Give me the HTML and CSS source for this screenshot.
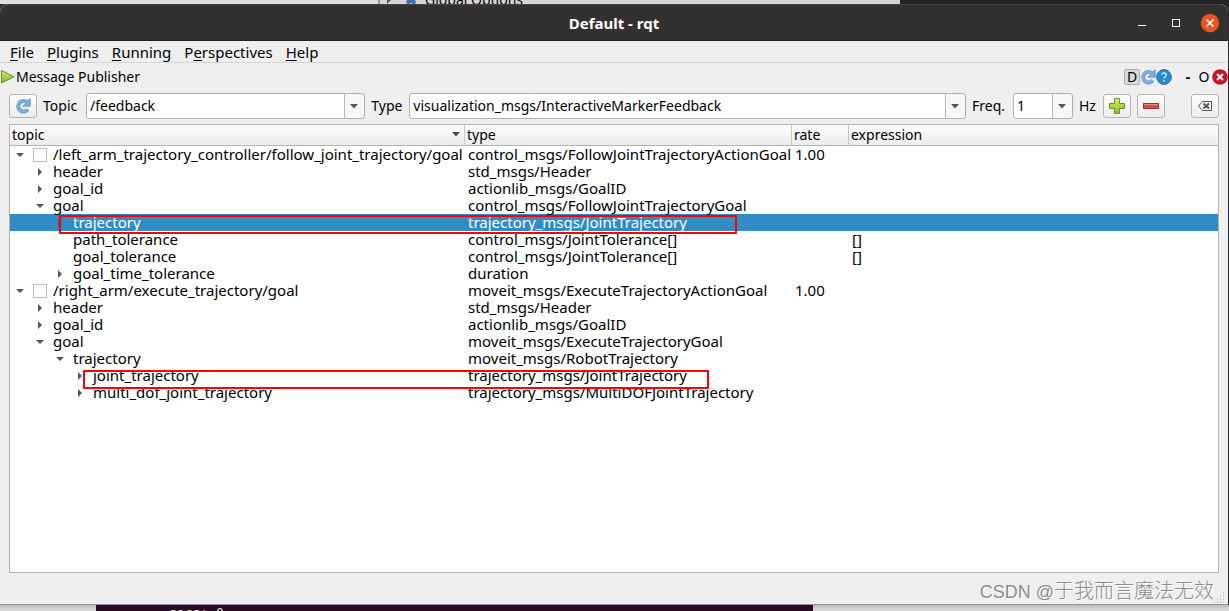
FILE: index.html
```html
<!DOCTYPE html>
<html lang="en">
<head>
<meta charset="utf-8">
<title>Default - rqt</title>
<link rel="stylesheet" href="styles.css">
</head>
<body>
<div class="backdrop-top"><div class="behind-window"><svg class="behind-arrow" width="4" height="4"><path d="M0 0h4L0 4z" fill="#555"/></svg><svg width="12" height="5"><path d="M2 0h8l1 2-1 2H8L6 3 4 4H2L1 2z" fill="#4670b5"/></svg><span>Global Options</span></div></div>
<main class="window">
  <header class="titlebar">
    <h1>Default - rqt</h1>
    <div class="window-buttons">
      <button aria-label="Minimize"><svg width="20" height="20"><path d="M6 12.5h8" stroke="#fff"/></svg></button>
      <button aria-label="Maximize"><svg width="20" height="20"><rect x="6.5" y="6.5" width="7" height="7" fill="none" stroke="#fff"/></svg></button>
      <button aria-label="Close"><svg width="20" height="20"><circle cx="10" cy="10" r="9.2" fill="#e95420"/><path d="M6.5 6.5l7 7m0-7l-7 7" stroke="#fff" stroke-width="1.5"/></svg></button>
    </div>
  </header>
  <nav class="menubar">
    <button><u>F</u>ile</button><button><u>P</u>lugins</button><button><u>R</u>unning</button><button>P<u>e</u>rspectives</button><button><u>H</u>elp</button>
  </nav>
  <section class="dock">
    <div class="dock-title">
      <svg width="16" height="16"><defs><linearGradient id="green" x2="0" y2="1"><stop offset="0" stop-color="#dce96a"/><stop offset="1" stop-color="#8bb52d"/></linearGradient></defs><path d="M1.5 1.5v12.5L14 7.8z" fill="url(#green)" stroke="#60932c"/></svg>
      <h2>Message Publisher</h2>
      <div class="dock-tools">
        <button class="dock-d">D</button>
        <button aria-label="Reload"><svg width="16" height="16" viewBox="0 0 16 16"><path d="M12.7 11.5A5.3 5.3 0 1 1 11.8 4" fill="none" stroke="#6795c4" stroke-width="4"/><path d="M15.2.6v7.6H7.7l2.5-2.5 2.5-2.7z" fill="#7caedf" stroke="#5a8abd" stroke-width=".8"/><path d="M12.3 11A5.2 5.2 0 1 1 11.6 4.2" fill="none" stroke="#80afdd" stroke-width="2.6"/></svg></button>
        <button aria-label="Help"><svg width="16" height="16" viewBox="0 0 16 16"><circle cx="8" cy="8" r="7.4" fill="#248bd7" stroke="#356d9b"/><path d="M5.8 5.8C6 3.2 10.4 3.4 10.2 6c-.1 1.6-2.1 1.6-2.1 3.5M8.1 11v1.5" fill="none" stroke="#dcefff" stroke-width="1.4"/></svg></button>
        <button class="dock-minimize">-</button>
        <button class="dock-float">O</button>
        <button aria-label="Close panel"><svg width="16" height="16"><circle cx="8" cy="8" r="7.8" fill="#c9142c"/><path d="M5 5l6 6m0-6l-6 6" stroke="#fff" stroke-width="2"/></svg></button>
      </div>
    </div>
    <form class="toolbar">
      <button type="button" class="tool" aria-label="Refresh"><svg width="16" height="16" viewBox="0 0 16 16"><path d="M12.7 11.5A5.3 5.3 0 1 1 11.8 4" fill="none" stroke="#6795c4" stroke-width="4"/><path d="M15.2.6v7.6H7.7l2.5-2.5 2.5-2.7z" fill="#7caedf" stroke="#5a8abd" stroke-width=".8"/><path d="M12.3 11A5.2 5.2 0 1 1 11.6 4.2" fill="none" stroke="#80afdd" stroke-width="2.6"/></svg></button>
      <label class="label-topic" for="topic">Topic</label>
      <div class="combo combo-topic"><select id="topic"><option>/feedback</option></select><svg width="8" height="5"><path d="M0 0h8L4 4.5z" fill="#555"/></svg></div>
      <label class="label-type" for="type">Type</label>
      <div class="combo combo-type"><select id="type"><option>visualization_msgs/InteractiveMarkerFeedback</option></select><svg width="8" height="5"><path d="M0 0h8L4 4.5z" fill="#555"/></svg></div>
      <label class="label-freq" for="freq">Freq.</label>
      <div class="combo combo-freq"><select id="freq"><option>1</option></select><svg width="8" height="5"><path d="M0 0h8L4 4.5z" fill="#555"/></svg></div>
      <span class="label-hz">Hz</span>
      <button type="button" class="tool" aria-label="Add"><svg width="16" height="16"><path d="M5.5.5h5v5h5v5h-5v5h-5v-5h-5v-5h5z" fill="url(#green)" stroke="#628f2c"/></svg></button>
      <button type="button" class="tool" aria-label="Remove"><svg width="16" height="16"><rect x=".5" y="5.5" width="15" height="5" fill="#db4b4d" stroke="#a92e32"/><path d="M1 6.5h14" stroke="#ed8b8b"/></svg></button>
      <button type="button" class="tool tool-clear" aria-label="Clear"><svg width="16" height="16"><path d="M5.5 3.5h9v9h-9L1.5 8z" fill="none" stroke="#555"/><path d="M6.5 5.5l5.5 5m0-5l-5.5 5" stroke="#555" stroke-width="2"/></svg></button>
    </form>
    <div class="tree">
      <table>
        <colgroup><col class="col-topic"><col class="col-type"><col class="col-rate"><col></colgroup>
        <thead><tr><th><div class="sort-head">topic<svg width="8" height="5"><path d="M0 0h8L4 4.5z" fill="#444"/></svg></div></th><th>type</th><th>rate</th><th>expression</th></tr></thead>
        <tbody>
          <tr><td><div class="node level-0"><i class="open"></i><input type="checkbox" id="left"><label for="left">/left_arm_trajectory_controller/follow_joint_trajectory/goal</label></div></td><td>control_msgs/FollowJointTrajectoryActionGoal</td><td>1.00</td><td></td></tr>
          <tr><td><div class="node level-1"><i class="closed"></i>header</div></td><td>std_msgs/Header</td><td></td><td></td></tr>
          <tr><td><div class="node level-1"><i class="closed"></i>goal_id</div></td><td>actionlib_msgs/GoalID</td><td></td><td></td></tr>
          <tr><td><div class="node level-1"><i class="open"></i>goal</div></td><td>control_msgs/FollowJointTrajectoryGoal</td><td></td><td></td></tr>
          <tr class="selected"><td><div class="node level-2"><i class="closed"></i>trajectory</div></td><td>trajectory_msgs/JointTrajectory</td><td></td><td></td></tr>
          <tr><td><div class="node level-2"><i></i>path_tolerance</div></td><td>control_msgs/JointTolerance[]</td><td></td><td>[]</td></tr>
          <tr><td><div class="node level-2"><i></i>goal_tolerance</div></td><td>control_msgs/JointTolerance[]</td><td></td><td>[]</td></tr>
          <tr><td><div class="node level-2"><i class="closed"></i>goal_time_tolerance</div></td><td>duration</td><td></td><td></td></tr>
          <tr><td><div class="node level-0"><i class="open"></i><input type="checkbox" id="right"><label for="right">/right_arm/execute_trajectory/goal</label></div></td><td>moveit_msgs/ExecuteTrajectoryActionGoal</td><td>1.00</td><td></td></tr>
          <tr><td><div class="node level-1"><i class="closed"></i>header</div></td><td>std_msgs/Header</td><td></td><td></td></tr>
          <tr><td><div class="node level-1"><i class="closed"></i>goal_id</div></td><td>actionlib_msgs/GoalID</td><td></td><td></td></tr>
          <tr><td><div class="node level-1"><i class="open"></i>goal</div></td><td>moveit_msgs/ExecuteTrajectoryGoal</td><td></td><td></td></tr>
          <tr><td><div class="node level-2"><i class="open"></i>trajectory</div></td><td>moveit_msgs/RobotTrajectory</td><td></td><td></td></tr>
          <tr><td><div class="node level-3"><i class="closed"></i>joint_trajectory</div></td><td>trajectory_msgs/JointTrajectory</td><td></td><td></td></tr>
          <tr><td><div class="node level-3"><i class="closed"></i>multi_dof_joint_trajectory</div></td><td>trajectory_msgs/MultiDOFJointTrajectory</td><td></td><td></td></tr>
        </tbody>
      </table>
      <div class="mark mark-first"></div>
      <div class="mark mark-second"></div>
    </div>
  </section>
  <footer class="statusbar"><span class="watermark"><span class="watermark-site">CSDN @</span>于我而言魔法无效</span><svg class="grip" width="12" height="12"><path d="M9 2h2M6 5h5M3 8h8M0 11h11" stroke="#aaa" stroke-dasharray="1 2"/></svg></footer>
</main>
<div class="backdrop-bottom"><div class="terminal">secs: 0</div></div>
</body>
</html>
```
FILE: styles.css
```css
* { box-sizing: border-box; }
body {
  margin: 0;
  height: 100vh;
  display: flex;
  flex-direction: column;
  overflow: hidden;
  background: #242325;
  color: #000;
  font: 14px/20px "Noto Sans", "Open Sans", sans-serif;
}
button, select, input { font: inherit; color: inherit; margin: 0; }
button { border: 0; padding: 0; background: none; }
svg { display: block; flex: none; }

.backdrop-top {
  height: 4px;
  flex: none;
  overflow: hidden;
  background: linear-gradient(90deg, #dedede 378px, #999 378px, #999 380px, #d5d5d5 380px, #d5d5d5 900px, #242325 900px);
}
.behind-window {
  display: flex;
  align-items: flex-start;
  padding-left: 387px;
  gap: 8px;
  line-height: 0;
}
.behind-arrow { margin-right: 6px; }

.window {
  flex: 1;
  min-height: 0;
  display: flex;
  flex-direction: column;
  margin-right: 1px;
  background: #efefef;
  border-bottom: 1px solid #929292;
  border-radius: 8px 8px 0 0;
}
.titlebar {
  flex: none;
  height: 37px;
  display: grid;
  grid-template-columns: 1fr auto 1fr;
  align-items: center;
  background: #333031;
  border-top: 1px solid #454243;
  border-bottom: 1px solid #222;
  border-radius: 8px 8px 0 0;
  color: #fff;
}
.titlebar h1 { grid-column: 2; margin: 0; font-size: 15px; line-height: 20px; font-weight: 700; }
.window-buttons { display: flex; justify-content: flex-end; gap: 14px; padding-right: 8px; }

.menubar {
  flex: none;
  height: 22px;
  display: flex;
  gap: 13px;
  padding-left: 10px;
  border-bottom: 1px solid #d5d5d5;
  font-size: 15px;
}
.menubar u { text-underline-offset: 2px; }

.dock { flex: 1; min-height: 0; display: flex; flex-direction: column; }
.dock-title { flex: none; height: 28px; display: flex; align-items: center; }
.dock-title h2 { margin: 0; font-size: 14px; line-height: 20px; font-weight: 400; }
.dock-tools { margin-left: auto; display: flex; align-items: center; line-height: 16px; }
.dock-d { width: 16px; height: 16px; border: 1px solid #aaa; border-radius: 2px; background: #dadada; line-height: 14px; }
.dock-minimize { width: 16px; margin-left: 8px; font-weight: 700; }
.dock-float { width: 16px; }

.toolbar { flex: none; display: flex; align-items: center; gap: 6px; padding: 2px 9px 5px; }
.tool {
  flex: none;
  width: 28px;
  height: 24px;
  display: grid;
  place-items: center;
  border: 1px solid #b4b4b4;
  border-radius: 3px;
  background: linear-gradient(#fefefe, #ededed);
}
.tool-clear { margin-left: 20px; }
.label-topic { width: 37px; }
.label-type { width: 32px; }
.label-freq { width: 35px; }
.label-hz { width: 18px; }
.combo {
  display: grid;
  grid-template-columns: 1fr 20px;
  align-items: center;
  justify-items: center;
  height: 26px;
  min-width: 0;
  border: 1px solid #b0b0b0;
  border-radius: 3px;
  background: linear-gradient(90deg, transparent calc(100% - 20px), #b8b8b8 calc(100% - 20px), #b8b8b8 calc(100% - 19px), #f7f7f7 calc(100% - 19px)), #fff;
}
.combo select {
  grid-area: 1 / 1 / 2 / 3;
  appearance: none;
  width: 100%;
  height: 24px;
  padding: 0 20px 0 3px;
  border: 0;
  background: transparent;
}
.combo svg { grid-area: 1 / 2; pointer-events: none; }
.combo-topic { flex: 1; }
.combo-type { flex: 2; }
.combo-freq { width: 60px; }

.tree {
  position: relative;
  flex: 1;
  min-height: 0;
  margin: 0 9px;
  border: 1px solid #b4b4b4;
  background: #fff;
}
table { width: 100%; table-layout: fixed; border-collapse: separate; border-spacing: 0; }
.col-topic { width: 455px; }
.col-type { width: 327px; }
.col-rate { width: 57px; }
th {
  height: 21px;
  padding: 0 2px;
  border-right: 1px solid #c8c8c8;
  border-bottom: 1px solid #b4b4b4;
  background: linear-gradient(#fdfdfd, #ececec);
  text-align: left;
  font-weight: 400;
  line-height: 20px;
}
th:last-child { border-right: 0; }
.sort-head { display: flex; justify-content: space-between; padding-right: 2px; }
.sort-head svg { margin-top: 7px; }
tbody { font-size: 15px; }
td { height: 17px; padding: 0 0 0 3px; line-height: 17px; white-space: nowrap; }
td:first-child { padding: 0; }
.selected { background: #308cc6; color: #fff; }
.node { display: flex; align-items: center; height: 17px; }
.node i { flex: none; width: 20px; height: 17px; display: grid; place-items: center; }
.open::before { content: ""; border: 4px solid transparent; border-top-color: #555; border-bottom: 0; }
.closed::before { content: ""; border: 4px solid transparent; border-left-color: #555; border-right: 0; }
.level-1 { padding-left: 20px; }
.level-2 { padding-left: 40px; }
.level-3 { padding-left: 60px; }
.level-1 i, .level-2 i, .level-3 i { margin-right: 3px; }
.node input { appearance: none; width: 14px; height: 14px; margin: 0 6px 0 3px; border: 1px solid #bbb; background: #fff; }

.mark { position: absolute; border: 2px solid #f00; border-radius: 1px; pointer-events: none; }
.mark-first { left: 49px; top: 90px; width: 678px; height: 19px; }
.mark-second { left: 73px; top: 245px; width: 626px; height: 19px; }

.statusbar { flex: none; height: 31px; display: flex; align-items: flex-end; justify-content: flex-end; padding-right: 2px; }
.watermark {
  color: #8c8c8c;
  font: 300 20px/24px "Liberation Sans", "Noto Sans CJK SC", sans-serif;
  text-shadow: 1px 1px 0 #fff;
}
.watermark-site { font-size: 18px; }
.grip { margin-bottom: 1px; }
.backdrop-bottom { flex: none; height: 6px; overflow: hidden; background: linear-gradient(#bcbcbc, #e0e0e0); }
.terminal {
  height: 6px;
  margin-left: 96px;
  width: 58.3%;
  padding-left: 73px;
  background: #2a0b23;
  color: #ddd;
  font: 13px/15px "DejaVu Sans Mono", monospace;
}
```
